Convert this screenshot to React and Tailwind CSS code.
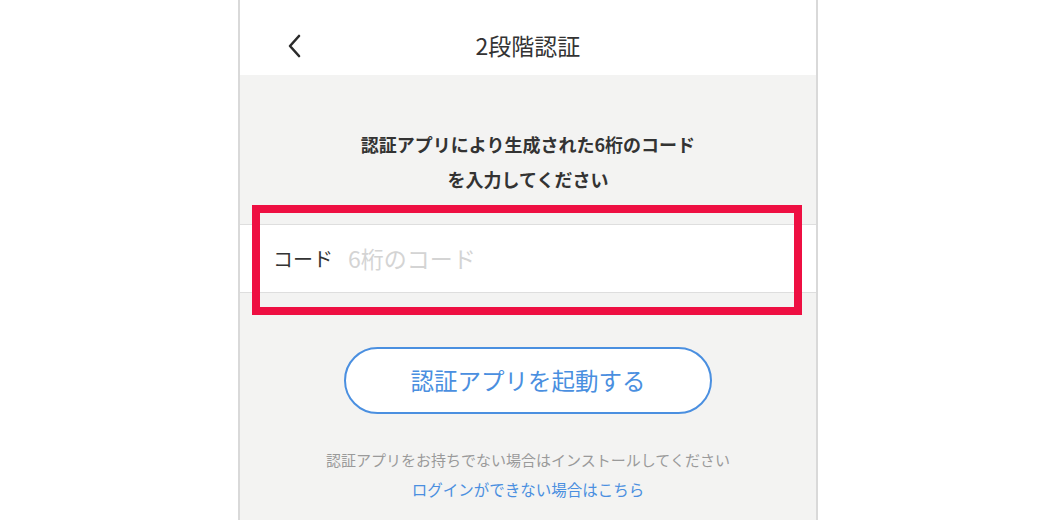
export default function App() {
  const font = { fontFamily: '"Noto Sans CJK JP", "Noto Sans", sans-serif' };
  return (
    <div className="flex h-[520px] w-full justify-center overflow-hidden bg-white" style={font}>
      <div className="flex w-[580px] flex-col border-x-2 border-[#d9d9d9] bg-[#f3f3f2]">
        {/* header */}
        <div className="relative flex h-[75px] shrink-0 justify-center bg-white pt-[34px]">
          <button className="absolute left-[46px] top-[33px] flex h-[26px] w-[18px] items-center justify-center">
            <svg width="16" height="26" viewBox="0 0 16 26" fill="none">
              <polyline points="12,3 3,13 12,23" stroke="#2b2b2b" strokeWidth="2.6" strokeLinecap="round" strokeLinejoin="round" />
            </svg>
          </button>
          <h1 className="text-[23px] leading-none text-[#333]">2段階認証</h1>
        </div>

        {/* body */}
        <div className="flex flex-col items-center pt-[52px]">
          <p className="text-center text-[18px] font-bold leading-[35px] text-[#333]">
            認証アプリにより生成された6桁のコード
            <br />
            を入力してください
          </p>

          <div className="relative mt-[27px] w-full">
            <div className="flex h-[69px] items-center gap-[15px] border-y border-[#dedede] bg-white px-[33px]">
              <span className="text-[20px] text-[#333]">コード</span>
              <input
                className="flex-1 bg-transparent text-[23px] text-[#333] outline-none placeholder:text-[#d4d4d4]"
                placeholder="6桁のコード"
                style={font}
              />
            </div>
            <div className="pointer-events-none absolute -top-[19px] -bottom-[22px] left-[12px] right-[14px] border-[8px] border-[#ee0f42]" />
          </div>

          <button className="mt-[54px] flex h-[67px] w-[368px] items-center justify-center rounded-full border-2 border-[#4a8fe0] bg-white text-[23.5px] text-[#4a8fe0]">
            認証アプリを起動する
          </button>

          <p className="mt-[34px] text-[15px] leading-[24px] text-[#9a9a9a]">
            認証アプリをお持ちでない場合はインストールしてください
          </p>
          <a className="mt-[5px] text-[15.5px] leading-[24px] text-[#4a8fe0]" href="#">
            ログインができない場合はこちら
          </a>
        </div>
      </div>
    </div>
  );
}
